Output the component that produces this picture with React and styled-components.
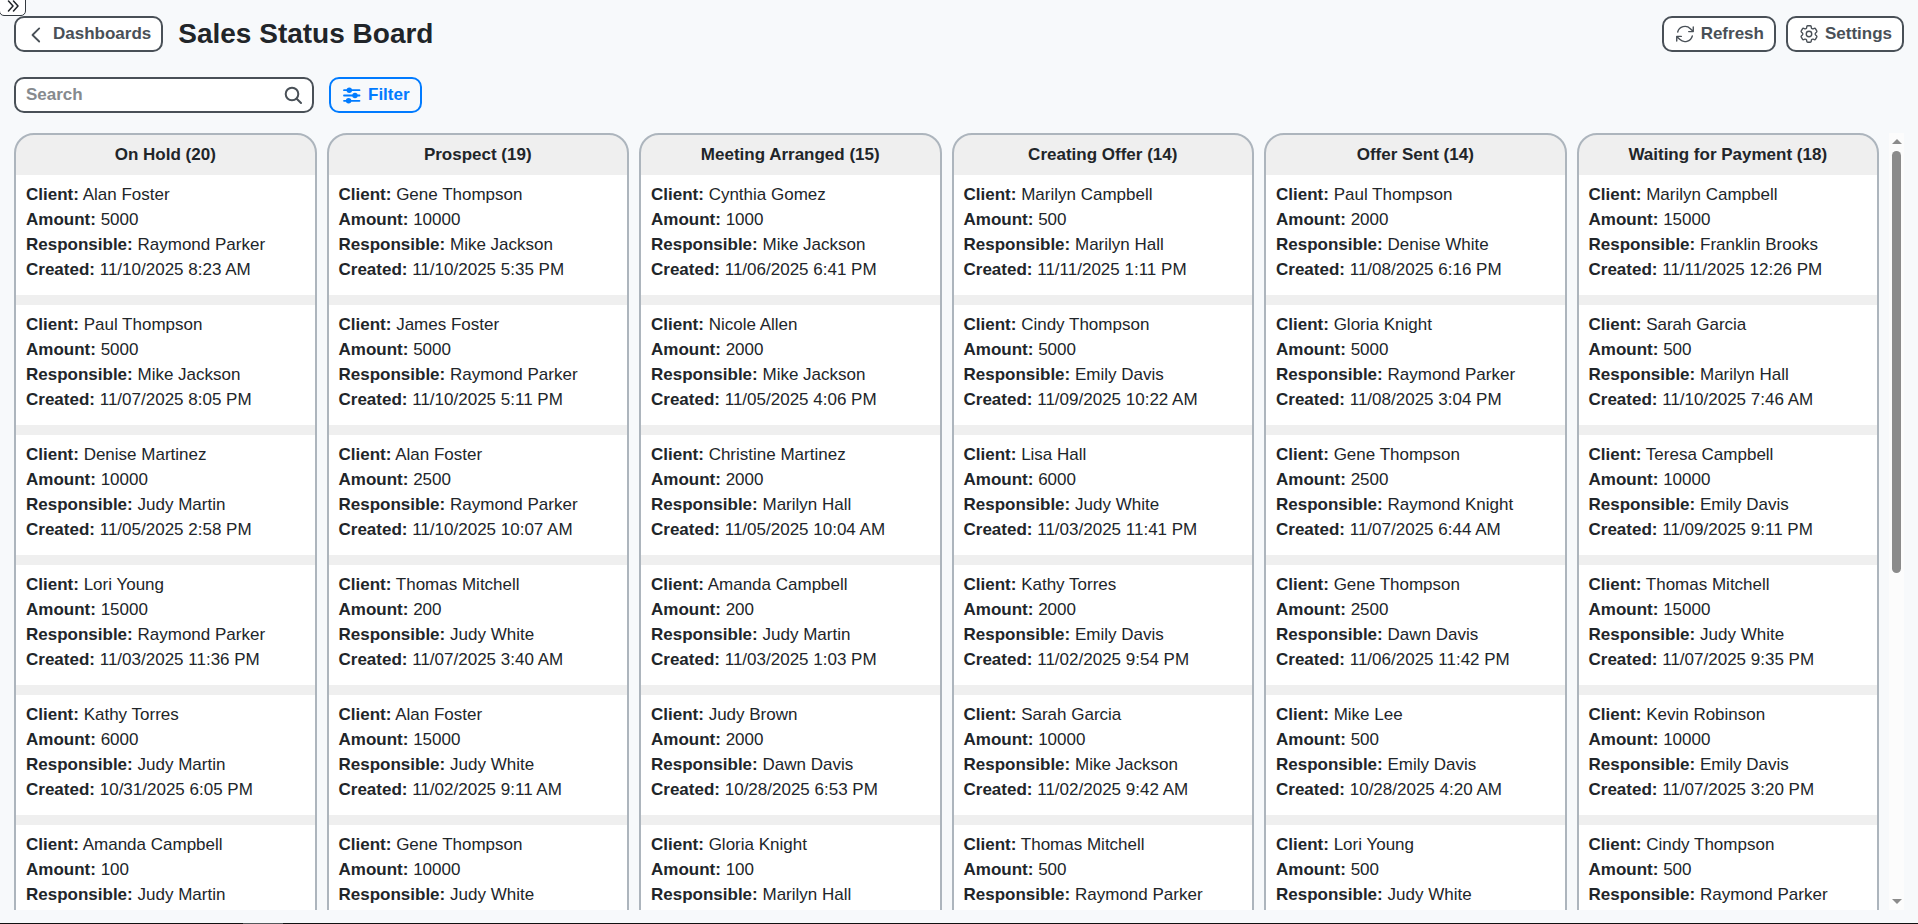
import React from 'react'
import styled, { createGlobalStyle } from 'styled-components'
import { HiOutlineArrowPath, HiOutlineCog6Tooth } from 'react-icons/hi2'

const GlobalStyle = createGlobalStyle`
  * {
    box-sizing: border-box;
  }
  body {
    margin: 0;
    background: #f7f9fb;
    color: #212529;
    font-family: 'Liberation Sans', Arial, sans-serif;
    font-size: 17px;
    line-height: 25px;
  }
`

const Page = styled.div`
  display: flex;
  flex-direction: column;
  height: 100vh;
  overflow: hidden;
`

const SideToggle = styled.button`
  position: absolute;
  top: -10px;
  left: -1px;
  width: 27px;
  height: 26px;
  padding: 9px 0 0;
  display: flex;
  justify-content: center;
  background: #fff;
  border: 1px solid #343a40;
  border-radius: 5px;
  color: #212529;
`

const Header = styled.header`
  display: flex;
  align-items: center;
  gap: 15px;
  padding: 16px 14px 0;
`

const Title = styled.h1`
  flex: 1;
  margin: 0;
  font-size: 28px;
  line-height: 36px;
`

const Actions = styled.div`
  display: flex;
  gap: 10px;
`

const Toolbar = styled.div`
  display: flex;
  gap: 15px;
  padding: 25px 14px 20px;
`

const Button = styled.button`
  display: flex;
  align-items: center;
  gap: 5px;
  height: 36px;
  padding: 0 10px 2px;
  border: 2px solid ${({ $accent }) => ($accent ? '#007bff' : '#495057')};
  border-radius: 10px;
  background: ${({ $accent }) => ($accent ? 'transparent' : '#fff')};
  color: ${({ $accent }) => ($accent ? '#007bff' : '#495057')};
  font: inherit;
  font-weight: bold;

  svg {
    margin-top: 2px;
  }
`

const SearchBox = styled.label`
  display: flex;
  align-items: center;
  width: 300px;
  height: 36px;
  padding: 0 10px;
  border: 2px solid #495057;
  border-radius: 10px;
  background: #fff;
  color: #495057;
`

const SearchInput = styled.input`
  flex: 1;
  min-width: 0;
  padding: 0 0 2px;
  border: 0;
  outline: 0;
  background: none;
  font: inherit;
  font-weight: bold;
  color: inherit;
  &::placeholder {
    color: #868a8e;
    opacity: 1;
  }
`

const BoardArea = styled.main`
  flex: 1;
  min-height: 0;
  display: flex;
  gap: 10px;
  padding: 0 14px 13px;
`

const Board = styled.div`
  flex: 1;
  display: grid;
  grid-template-columns: repeat(6, 1fr);
  align-items: start;
  gap: 10px;
  overflow: hidden;
`

const Column = styled.section`
  border: 2px solid #adb5bd;
  border-radius: 20px;
  background: #efefef;
  overflow: hidden;
`

const ColumnTitle = styled.h2`
  margin: 0;
  font-size: 17px;
  line-height: 40px;
  text-align: center;
`

const CardList = styled.div`
  display: grid;
  gap: 10px;
`

const Card = styled.article`
  height: 120px;
  padding: 7px 10px 13px;
  background: #fff;
  white-space: nowrap;
`

const ScrollBar = styled.div`
  display: flex;
  flex-direction: column;
  align-items: center;
  width: 15px;
  padding: 6px 0;
  background: #fcfcfc;
`

const ScrollTrack = styled.div`
  flex: 1;
  width: 9px;
  margin: 7px 0;
`

const ScrollThumb = styled.div`
  height: 57%;
  border-radius: 5px;
  background: #8b8b8b;
`

const Arrow = styled.div`
  border: 5px solid transparent;
  border-top-width: ${({ $up }) => ($up ? 0 : '5px')};
  border-bottom-width: ${({ $up }) => ($up ? '5px' : 0)};
  border-${({ $up }) => ($up ? 'bottom' : 'top')}-color: #8b8b8b;
`

const StatusStrip = styled.footer`
  height: 1px;
  padding-left: 243px;
  background: #111;
`

const StripHandle = styled.div`
  width: 40px;
  height: 1px;
  background: #55585b;
`

const Svg = ({ size = 22, stroke = 1.5, children }) => (
  <svg
    width={size}
    height={size}
    viewBox={`0 0 ${size} ${size}`}
    fill="none"
    stroke="currentColor"
    strokeWidth={stroke}
    strokeLinecap="round"
    strokeLinejoin="round"
    aria-hidden="true"
  >
    {children}
  </svg>
)

const BackIcon = () => (
  <Svg stroke={1.8}>
    <path d="M13.2 5.4 6.500 12l6.700 6.500" />
  </Svg>
)

const DoubleChevron = () => (
  <Svg size={12} stroke={1.5}>
    <path d="M1.500 1 6 6l-4.500 5M6.500 1 11 6l-4.500 5" />
  </Svg>
)

const SearchIcon = () => (
  <Svg stroke={2}>
    <circle cx="12" cy="10" r="6.300" />
    <path d="m16.700 14.700 4.300 4.300" />
  </Svg>
)

const FilterIcon = () => (
  <Svg stroke={1.8}>
    <path d="M3 6.200h15.500M3 11.500h15.500M3 16.800h15.500" />
    <g fill="currentColor" stroke="none">
      <circle cx="8.300" cy="6.200" r="2.700" />
      <circle cx="14" cy="11.500" r="2.700" />
      <circle cx="7.600" cy="16.800" r="2.700" />
    </g>
  </Svg>
)

// [client, amount, responsible, created]
const columns = [
  {
    name: 'On Hold',
    count: 20,
    cards: [
      ['Alan Foster', 5000, 'Raymond Parker', '11/10/2025 8:23 AM'],
      ['Paul Thompson', 5000, 'Mike Jackson', '11/07/2025 8:05 PM'],
      ['Denise Martinez', 10000, 'Judy Martin', '11/05/2025 2:58 PM'],
      ['Lori Young', 15000, 'Raymond Parker', '11/03/2025 11:36 PM'],
      ['Kathy Torres', 6000, 'Judy Martin', '10/31/2025 6:05 PM'],
      ['Amanda Campbell', 100, 'Judy Martin'],
    ],
  },
  {
    name: 'Prospect',
    count: 19,
    cards: [
      ['Gene Thompson', 10000, 'Mike Jackson', '11/10/2025 5:35 PM'],
      ['James Foster', 5000, 'Raymond Parker', '11/10/2025 5:11 PM'],
      ['Alan Foster', 2500, 'Raymond Parker', '11/10/2025 10:07 AM'],
      ['Thomas Mitchell', 200, 'Judy White', '11/07/2025 3:40 AM'],
      ['Alan Foster', 15000, 'Judy White', '11/02/2025 9:11 AM'],
      ['Gene Thompson', 10000, 'Judy White'],
    ],
  },
  {
    name: 'Meeting Arranged',
    count: 15,
    cards: [
      ['Cynthia Gomez', 1000, 'Mike Jackson', '11/06/2025 6:41 PM'],
      ['Nicole Allen', 2000, 'Mike Jackson', '11/05/2025 4:06 PM'],
      ['Christine Martinez', 2000, 'Marilyn Hall', '11/05/2025 10:04 AM'],
      ['Amanda Campbell', 200, 'Judy Martin', '11/03/2025 1:03 PM'],
      ['Judy Brown', 2000, 'Dawn Davis', '10/28/2025 6:53 PM'],
      ['Gloria Knight', 100, 'Marilyn Hall'],
    ],
  },
  {
    name: 'Creating Offer',
    count: 14,
    cards: [
      ['Marilyn Campbell', 500, 'Marilyn Hall', '11/11/2025 1:11 PM'],
      ['Cindy Thompson', 5000, 'Emily Davis', '11/09/2025 10:22 AM'],
      ['Lisa Hall', 6000, 'Judy White', '11/03/2025 11:41 PM'],
      ['Kathy Torres', 2000, 'Emily Davis', '11/02/2025 9:54 PM'],
      ['Sarah Garcia', 10000, 'Mike Jackson', '11/02/2025 9:42 AM'],
      ['Thomas Mitchell', 500, 'Raymond Parker'],
    ],
  },
  {
    name: 'Offer Sent',
    count: 14,
    cards: [
      ['Paul Thompson', 2000, 'Denise White', '11/08/2025 6:16 PM'],
      ['Gloria Knight', 5000, 'Raymond Parker', '11/08/2025 3:04 PM'],
      ['Gene Thompson', 2500, 'Raymond Knight', '11/07/2025 6:44 AM'],
      ['Gene Thompson', 2500, 'Dawn Davis', '11/06/2025 11:42 PM'],
      ['Mike Lee', 500, 'Emily Davis', '10/28/2025 4:20 AM'],
      ['Lori Young', 500, 'Judy White'],
    ],
  },
  {
    name: 'Waiting for Payment',
    count: 18,
    cards: [
      ['Marilyn Campbell', 15000, 'Franklin Brooks', '11/11/2025 12:26 PM'],
      ['Sarah Garcia', 500, 'Marilyn Hall', '11/10/2025 7:46 AM'],
      ['Teresa Campbell', 10000, 'Emily Davis', '11/09/2025 9:11 PM'],
      ['Thomas Mitchell', 15000, 'Judy White', '11/07/2025 9:35 PM'],
      ['Kevin Robinson', 10000, 'Emily Davis', '11/07/2025 3:20 PM'],
      ['Cindy Thompson', 500, 'Raymond Parker'],
    ],
  },
]

const Field = ({ label, value }) => (
  <div>
    <b>{label}:</b> {value}
  </div>
)

const card = ([client, amount, responsible, created], i) => (
  <Card key={`card-${i}`}>
    <Field label="Client" value={client} />
    <Field label="Amount" value={amount} />
    <Field label="Responsible" value={responsible} />
    {created && <Field label="Created" value={created} />}
  </Card>
)

const column = ({ name, count, cards }) => (
  <Column key={name}>
    <ColumnTitle>
      {name} ({count})
    </ColumnTitle>
    <CardList>{cards.map(card)}</CardList>
  </Column>
)

export default () => (
  <Page>
    <GlobalStyle />
    <Header>
      <Button>
        <BackIcon />
        Dashboards
      </Button>
      <Title>Sales Status Board</Title>
      <Actions>
        <Button>
          <HiOutlineArrowPath size={22} />
          Refresh
        </Button>
        <Button>
          <HiOutlineCog6Tooth size={22} />
          Settings
        </Button>
      </Actions>
    </Header>
    <SideToggle aria-label="Expand menu">
      <DoubleChevron />
    </SideToggle>
    <Toolbar>
      <SearchBox>
        <SearchInput type="text" placeholder="Search" aria-label="Search" />
        <SearchIcon />
      </SearchBox>
      <Button $accent>
        <FilterIcon />
        Filter
      </Button>
    </Toolbar>
    <BoardArea>
      <Board>{columns.map(column)}</Board>
      <ScrollBar>
        <Arrow $up />
        <ScrollTrack>
          <ScrollThumb />
        </ScrollTrack>
        <Arrow />
      </ScrollBar>
    </BoardArea>
    <StatusStrip>
      <StripHandle />
    </StatusStrip>
  </Page>
)
